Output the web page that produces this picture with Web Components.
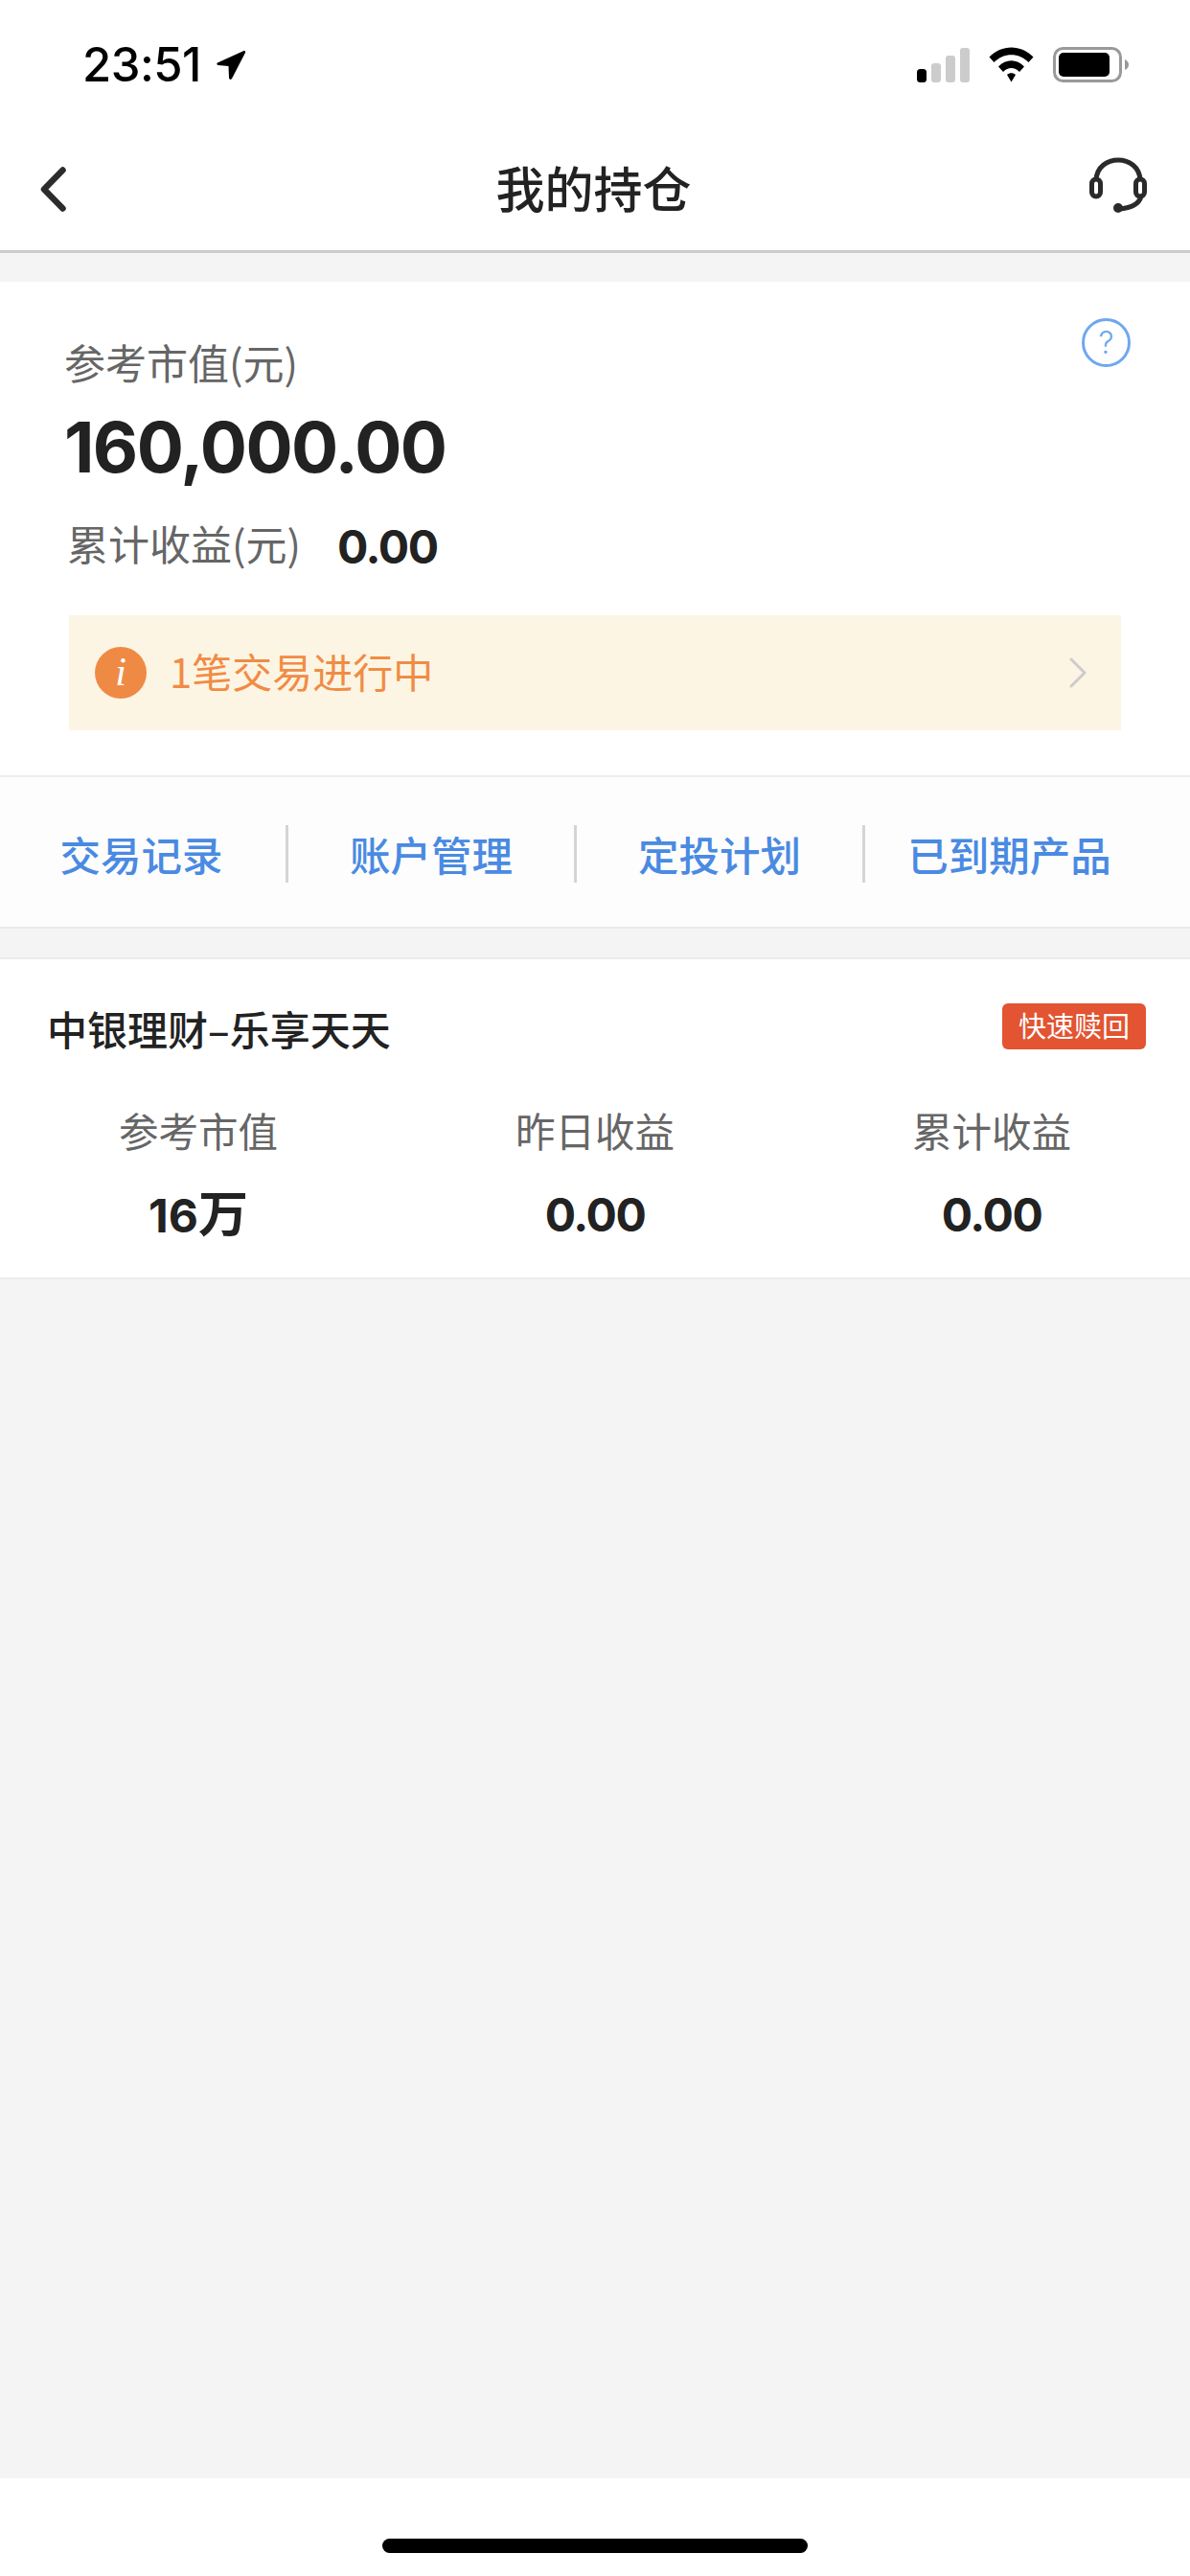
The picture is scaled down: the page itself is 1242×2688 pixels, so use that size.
<!DOCTYPE html>
<html lang="zh-CN">
<head>
<meta charset="utf-8">
<title>我的持仓</title>
<style>
    html, body {
        margin: 0;
        padding: 0;
    }
    body {
        width: 1242px;
        height: 2688px;
        display: flex;
        flex-direction: column;
        background: #fff;
        font-family: Inter, "Noto Sans CJK SC", sans-serif;
    }
    main {
        flex: 1;
        background: #f4f4f4;
        padding-top: 30px;
    }
</style>
</head>
<body>
    <status-bar time="23:51"></status-bar>
    <nav-bar>我的持仓</nav-bar>
    <main>
        <summary-card>
            <span slot="label">参考市值(元)</span>
            <span slot="amount">160,000.00</span>
            <span slot="profit-label">累计收益(元)</span>
            <span slot="profit">0.00</span>
            <notice-banner slot="notice">1笔交易进行中</notice-banner>
        </summary-card>
        <action-bar>
            <action-link>交易记录</action-link>
            <action-link>账户管理</action-link>
            <action-link>定投计划</action-link>
            <action-link>已到期产品</action-link>
        </action-bar>
        <holding-card>
            <span slot="title">中银理财–乐享天天</span>
            <span slot="badge">快速赎回</span>
            <holding-stat label="参考市值"><span style="letter-spacing: 0">16<span style="font-size: 52px">万</span></span></holding-stat>
            <holding-stat label="昨日收益">0.00</holding-stat>
            <holding-stat label="累计收益">0.00</holding-stat>
        </holding-card>
    </main>
    <home-indicator></home-indicator>

<script>
// --- Top of the screen ---
class StatusBar extends HTMLElement {
    constructor() {
        super();
        this.attachShadow({ mode: 'open' });
    }

    connectedCallback() {
        const time = this.getAttribute('time');

        this.shadowRoot.innerHTML = `
            <style>
                :host {
                    display: flex;
                    justify-content: space-between;
                    align-items: flex-start;
                    box-sizing: border-box;
                    height: 130px;
                    padding: 49px 64px 0 86px;
                    color: #000;
                }
                .left {
                    display: flex;
                    align-items: flex-start;
                    gap: 15px;
                }
                .time {
                    font: 500 49px/38px Inter, sans-serif;
                    letter-spacing: -0.5px;
                }
                .right {
                    display: flex;
                    align-items: flex-start;
                    gap: 20px;
                }
                svg {
                    display: block;
                }
                .arrow {
                    margin-top: 3px;
                }
            </style>
            <div class="left">
                <span class="time">${time}</span>
                <svg class="arrow" width="32" height="32" viewBox="0 0 31 32">
                    <path d="M29 1 L1.500 13.500 Q0 15 2 16 L13 17 L13.500 29.500 Q14.500 32 16.500 30 L30.500 3 Q31 0.500 29 1Z" fill="#000"/>
                </svg>
            </div>
            <div class="right">
                <svg width="55" height="37" viewBox="0 0 55 37">
                    <rect x="0" y="23" width="10" height="14" rx="3.500" fill="#000"/>
                    <rect x="15" y="17" width="10" height="20" rx="3" fill="#ccc"/>
                    <rect x="30" y="9" width="10" height="28" rx="3" fill="#ccc"/>
                    <rect x="45" y="1" width="10" height="36" rx="3" fill="#ccc"/>
                </svg>
                <svg width="47" height="37" viewBox="0 0 47 37">
                    <path d="M0.500 10.500 C13 -3 34 -3 46.500 10.500 L41.500 16 C31.500 5.500 15.500 5.500 5.500 16Z" fill="#000"/>
                    <path d="M10 20.500 C18 12 29 12 37 20.500 L32 26 C27 20.500 20 20.500 15 26Z" fill="#000"/>
                    <path d="M19 29 C21.500 26.500 25.500 26.500 28 29 L23.500 36.500Z" fill="#000"/>
                </svg>
                <svg width="79" height="37" viewBox="0 0 79 37">
                    <rect x="1.500" y="1.500" width="69" height="34" rx="9" fill="none" stroke="#999" stroke-width="3"/>
                    <rect x="6" y="6" width="53" height="25" rx="5" fill="#000"/>
                    <path d="M75 13 Q79 15 79 18.500 Q79 22 75 24Z" fill="#999"/>
                </svg>
            </div>
        `;
    }
}
customElements.define('status-bar', StatusBar);


class NavBar extends HTMLElement {
    constructor() {
        super();
        this.attachShadow({ mode: 'open' });
        this.shadowRoot.innerHTML = `
            <style>
                :host {
                    display: grid;
                    grid-template-columns: 1fr auto 1fr;
                    align-items: center;
                    box-sizing: border-box;
                    height: 134px;
                    padding: 3px 45px 0 42px;
                    border-bottom: 3px solid #ccc;
                    background: #fff;
                }
                .title {
                    font: 500 51px/60px "Noto Sans CJK SC", sans-serif;
                    color: #222;
                    margin-top: -5px;
                }
                .service {
                    justify-self: end;
                    margin-top: -8px;
                }
                svg {
                    display: block;
                }
            </style>
            <svg width="27" height="47" viewBox="0 0 27 47">
                <path d="M23.500 3.500 L4 23.500 L23.500 43.500" fill="none" stroke="#2c2c2c" stroke-width="6.500" stroke-linecap="round" stroke-linejoin="round"/>
            </svg>
            <span class="title"><slot></slot></span>
            <svg class="service" width="60" height="58" viewBox="0 0 60 58">
                <g fill="none" stroke="#2a2a2a" stroke-width="5">
                    <path d="M7 24 C8 -4 52 -4 53 24"/>
                    <rect x="2.500" y="23" width="9" height="18" rx="4.500"/>
                    <rect x="48.500" y="23" width="9" height="18" rx="4.500"/>
                    <path d="M54 41 C52 48 44 53 31 54" stroke-linecap="round"/>
                </g>
                <circle cx="30" cy="53" r="5" fill="#2a2a2a"/>
            </svg>
        `;
    }
}
customElements.define('nav-bar', NavBar);


// --- Summary block ---
class SummaryCard extends HTMLElement {
    constructor() {
        super();
        this.attachShadow({ mode: 'open' });
        this.shadowRoot.innerHTML = `
            <style>
                :host {
                    display: block;
                    box-sizing: border-box;
                    height: 515px;
                    padding: 38px 72px 0 67px;
                    background: #fff;
                }
                .head {
                    display: flex;
                    justify-content: space-between;
                    align-items: flex-start;
                    margin-bottom: 10px;
                }
                .label {
                    font: 400 43px/90px "Noto Sans CJK SC", sans-serif;
                    color: #666;
                }
                .help {
                    box-sizing: border-box;
                    width: 51px;
                    height: 51px;
                    border: 3px solid #6ea8ef;
                    border-radius: 50%;
                    margin-right: -10px;
                    text-align: center;
                    font: 300 32px/45px Inter, sans-serif;
                    color: #6ea8ef;
                }
                .amount {
                    font: 700 73px/70px Inter, sans-serif;
                    letter-spacing: -1.6px;
                    color: #222;
                }
                .profit {
                    display: flex;
                    align-items: center;
                    margin: 39px 0 41px 3px;
                    height: 60px;
                }
                .profit-label {
                    font: 400 43px/60px "Noto Sans CJK SC", sans-serif;
                    color: #666;
                    margin-top: -10px;
                    width: 282px;
                }
                .profit-value {
                    font: 700 48px/60px Inter, sans-serif;
                    letter-spacing: -1.4px;
                    color: #222;
                }
                .notice {
                    margin-left: 5px;
                }
            </style>
            <div class="head">
                <div class="label"><slot name="label"></slot></div>
                <div class="help">?</div>
            </div>
            <div class="amount"><slot name="amount"></slot></div>
            <div class="profit">
                <div class="profit-label"><slot name="profit-label"></slot></div>
                <div class="profit-value"><slot name="profit"></slot></div>
            </div>
            <div class="notice"><slot name="notice"></slot></div>
        `;
    }
}
customElements.define('summary-card', SummaryCard);


class NoticeBanner extends HTMLElement {
    constructor() {
        super();
        this.attachShadow({ mode: 'open' });
        this.shadowRoot.innerHTML = `
            <style>
                :host {
                    display: flex;
                    align-items: center;
                    box-sizing: border-box;
                    height: 120px;
                    padding: 0 36px 0 27px;
                    background: #fdf5e4;
                }
                .icon {
                    flex: none;
                    width: 54px;
                    height: 54px;
                    border-radius: 50%;
                    background: #ef8a45;
                    color: #fff;
                    text-align: center;
                    font: italic 400 42px/52px "Liberation Serif", serif;
                }
                .text {
                    flex: 1;
                    margin: -5px 0 0 24px;
                    font: 400 42px/60px "Noto Sans CJK SC", sans-serif;
                    color: #f08c45;
                }
                svg {
                    display: block;
                }
            </style>
            <span class="icon">i</span>
            <span class="text"><slot></slot></span>
            <svg width="18" height="32" viewBox="0 0 18 32">
                <path d="M2 2 L16 16 L2 30" fill="none" stroke="#ccc" stroke-width="3" stroke-linecap="round" stroke-linejoin="round"/>
            </svg>
        `;
    }
}
customElements.define('notice-banner', NoticeBanner);


// --- Shortcut links ---
class ActionBar extends HTMLElement {
    constructor() {
        super();
        this.attachShadow({ mode: 'open' });
        this.shadowRoot.innerHTML = `
            <style>
                :host {
                    display: grid;
                    grid-template-columns: repeat(4, 301px);
                    align-items: center;
                    box-sizing: border-box;
                    height: 160px;
                    padding-top: 4px;
                    border-top: 2px solid #eee;
                    border-bottom: 2px solid #e9e9e9;
                    background: #fdfdfd;
                }
            </style>
            <slot></slot>
        `;
    }
}
customElements.define('action-bar', ActionBar);


class ActionLink extends HTMLElement {
    constructor() {
        super();
        this.attachShadow({ mode: 'open' });
        this.shadowRoot.innerHTML = `
            <style>
                :host {
                    display: block;
                    box-sizing: border-box;
                    height: 60px;
                    border-right: 3px solid #d4d4d4;
                    text-align: center;
                    font: 500 42.500px/60px "Noto Sans CJK SC", sans-serif;
                    color: #4a8ae2;
                }
                :host(:first-child) {
                    padding-right: 3px;
                }
                :host(:last-child) {
                    border-right: 0;
                }
            </style>
            <slot></slot>
        `;
    }
}
customElements.define('action-link', ActionLink);


// --- Holding list ---
class HoldingCard extends HTMLElement {
    constructor() {
        super();
        this.attachShadow({ mode: 'open' });
        this.shadowRoot.innerHTML = `
            <style>
                :host {
                    display: block;
                    box-sizing: border-box;
                    height: 336px;
                    margin-top: 30px;
                    padding-top: 46px;
                    border-top: 2px solid #ececec;
                    border-bottom: 2px solid #ececec;
                    background: #fff;
                }
                .head {
                    display: flex;
                    justify-content: space-between;
                    align-items: flex-start;
                    padding: 0 46px 0 49px;
                }
                .title {
                    font: 500 42px/52px "Noto Sans CJK SC", sans-serif;
                    color: #222;
                }
                .badge {
                    box-sizing: border-box;
                    height: 48px;
                    padding: 0 17px 0 17px;
                    border-radius: 6px;
                    background: #e25432;
                    color: #fff;
                    font: 400 29px/44px "Noto Sans CJK SC", sans-serif;
                }
                .stats {
                    display: grid;
                    grid-template-columns: repeat(3, 1fr);
                    margin-top: 50px;
                }
            </style>
            <div class="head">
                <div class="title"><slot name="title"></slot></div>
                <div class="badge"><slot name="badge"></slot></div>
            </div>
            <div class="stats"><slot></slot></div>
        `;
    }
}
customElements.define('holding-card', HoldingCard);


class HoldingStat extends HTMLElement {
    constructor() {
        super();
        this.attachShadow({ mode: 'open' });
    }

    connectedCallback() {
        const label = this.getAttribute('label');

        this.shadowRoot.innerHTML = `
            <style>
                :host {
                    display: block;
                    text-align: center;
                }
                .label {
                    font: 400 41.500px/60px "Noto Sans CJK SC", sans-serif;
                    color: #666;
                }
                .value {
                    margin-top: 29px;
                    font: 700 48px/60px Inter, "Noto Sans CJK SC", sans-serif;
                    letter-spacing: -1.4px;
                    color: #222;
                }
            </style>
            <div class="label">${label}</div>
            <div class="value"><slot></slot></div>
        `;
    }
}
customElements.define('holding-stat', HoldingStat);


// --- Bottom of the screen ---
class HomeIndicator extends HTMLElement {
    constructor() {
        super();
        this.attachShadow({ mode: 'open' });
        this.shadowRoot.innerHTML = `
            <style>
                :host {
                    display: flex;
                    justify-content: center;
                    box-sizing: border-box;
                    height: 102px;
                    padding-top: 63px;
                    background: #fff;
                }
                .bar {
                    width: 444px;
                    height: 15px;
                    border-radius: 8px;
                    background: #000;
                }
            </style>
            <div class="bar"></div>
        `;
    }
}
customElements.define('home-indicator', HomeIndicator);
</script>
</body>
</html>
